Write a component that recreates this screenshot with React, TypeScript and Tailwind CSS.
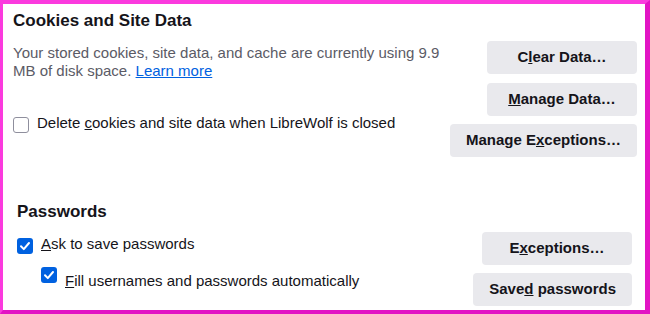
import React from 'react'

const font = { fontFamily: '"Liberation Sans", Arial, sans-serif' }

function Checkbox({ checked }: { checked?: boolean }) {
  if (checked) {
    return (
      <span className="flex h-4 w-4 shrink-0 items-center justify-center rounded-[3px] bg-[#0061e0]">
        <svg width="12" height="12" viewBox="0 0 12 12" fill="none">
          <path d="M2 6.3 L4.8 9.1 L10 3" stroke="white" strokeWidth="2" strokeLinecap="round" strokeLinejoin="round" />
        </svg>
      </span>
    )
  }
  return <span className="block h-4 w-4 shrink-0 rounded-[3px] border border-[#8f8f9d] bg-white" />
}

function Button({ children }: { children: React.ReactNode }) {
  return (
    <button className="h-[33px] min-w-[150px] rounded-[4px] bg-[#e9e9ed] px-4 text-[15px] font-bold text-[#15141a]">
      {children}
    </button>
  )
}

export default function App() {
  return (
    <div
      style={font}
      className="h-[314px] w-[650px] overflow-hidden border-t-4 border-r-[5px] border-b-4 border-l-[3px] border-t-[#fb3ade] border-l-[#fb3ade] border-r-[#e214c4] border-b-[#e214c4] bg-white"
    >
      {/* Cookies */}
      <div className="pl-[10px] pr-[8px]">
        <h2 className="mt-[6px] text-[17px] leading-[22px] font-bold text-[#15141a]">Cookies and Site Data</h2>
        <div className="mt-[9px] flex items-start">
          <div className="flex-1">
            <p className="mt-[3px] pr-0 text-[15px] leading-[18px] text-[#5b5b66]">
              Your stored cookies, site data, and cache are currently using 9.9 MB of disk space.{' '}
              <a className="text-[#0061e0] underline">Learn more</a>
            </p>
            <label className="mt-[34px] flex items-start gap-2 text-[15px] leading-[18px] text-[#15141a]">
              <span className="mt-[3px]">
                <Checkbox />
              </span>
              <span>
                Delete <u>c</u>ookies and site data when LibreWolf is closed
              </span>
            </label>
          </div>
          <div className="flex flex-col items-end gap-2">
            <div className="flex flex-col gap-[9px]">
              <Button>
                C<u>l</u>ear Data…
              </Button>
              <Button>
                <u>M</u>anage Data…
              </Button>
            </div>
            <Button>
              Manage E<u>x</u>ceptions…
            </Button>
          </div>
        </div>
      </div>

      {/* Passwords */}
      <div className="mt-[44px] pl-[14px] pr-[13px]">
        <h2 className="text-[17px] leading-[22px] font-bold text-[#15141a]">Passwords</h2>
        <div className="mt-[9px] flex items-start gap-3">
          <div className="flex-1 text-[15px] leading-[18px] text-[#15141a]">
            <label className="mt-[3px] flex items-start gap-2">
              <span className="mt-[3px]">
                <Checkbox checked />
              </span>
              <span>
                <u>A</u>sk to save passwords
              </span>
            </label>
            <label className="mt-[13px] ml-6 flex items-start gap-2">
              <Checkbox checked />
              <span className="mt-[5px]">
                <u>F</u>ill usernames and passwords automatically
              </span>
            </label>
          </div>
          <div className="flex flex-col items-end gap-2">
            <Button>
              E<u>x</u>ceptions…
            </Button>
            <Button>
              Save<u>d</u> passwords
            </Button>
          </div>
        </div>
      </div>
    </div>
  )
}
